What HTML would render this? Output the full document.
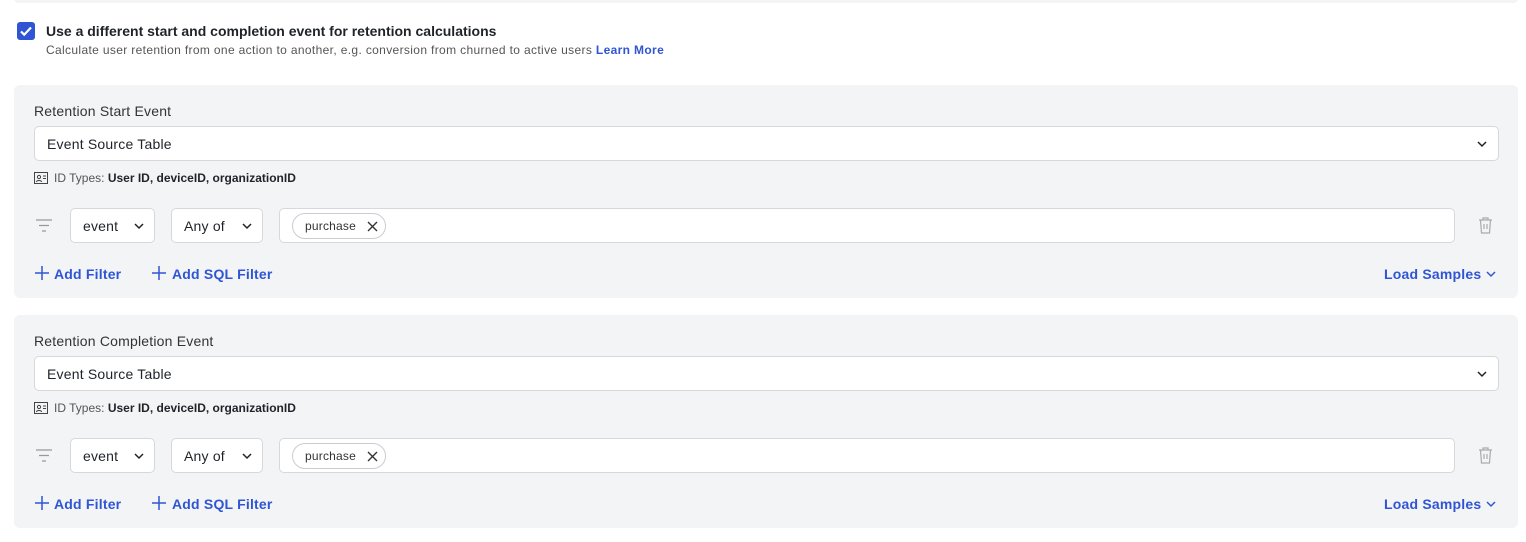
<!DOCTYPE html><html><head><style>
*{box-sizing:border-box;margin:0;padding:0}
body{width:1526px;height:542px;background:#fff;font-family:"Liberation Sans",sans-serif;color:#1f2328;position:relative;overflow:hidden}
.top{position:absolute;left:14px;top:-6px;width:1504px;height:9px;background:#f3f4f6;border-radius:6px}
.cb{position:absolute;left:17px;top:22px;width:18px;height:18px;background:#2f55d4;border-radius:3px}
.t1{position:absolute;left:46px;top:23px;font-size:14px;font-weight:bold;color:#1f2328}
.t2{position:absolute;left:46px;top:43px;font-size:12px;letter-spacing:0.35px;color:#555}
.t2 b{color:#2f55d4}
.panel{position:absolute;left:14px;width:1504px;height:213px;background:#f3f4f6;border-radius:6px}
.lbl{position:absolute;left:20px;top:18px;font-size:14px;color:#333;letter-spacing:0.2px}
.sel{position:absolute;left:20px;top:41px;width:1465px;height:35px;background:#fff;border:1px solid #d6d8dc;border-radius:5px;font-size:14px;padding:9px 12px;letter-spacing:0.2px}
.ids{position:absolute;left:20px;top:86px;font-size:12px;color:#555}
.ids b{color:#1f2328;font-weight:bold}
.box{position:absolute;top:123px;height:35px;background:#fff;border:1px solid #d6d8dc;border-radius:5px;font-size:14px;padding:9px 12px;letter-spacing:0.2px}
.chip{position:absolute;left:12px;top:4px;height:26px;width:94px;border:1px solid #c9ccd1;border-radius:13px;font-size:12px;line-height:24px;padding-left:12px;color:#333}
.link{position:absolute;top:181px;font-size:14px;font-weight:bold;color:#2f55d4;letter-spacing:0.2px}
svg{position:absolute}
</style></head><body>
<div class="top"></div>
<div class="cb"><svg width="18" height="18" viewBox="0 0 18 18"><path d="M4 9.5l3.2 3.2L14 5.5" stroke="#fff" stroke-width="2.2" fill="none"/></svg></div>
<div class="t1">Use a different start and completion event for retention calculations</div>
<div class="t2">Calculate user retention from one action to another, e.g. conversion from churned to active users <b>Learn More</b></div>

<div class="panel" style="top:85px">
<div class="lbl">Retention Start Event</div>
<div class="sel">Event Source Table<svg style="right:10px;top:13px" width="12" height="8"><path d="M2 2l4 4 4-4" stroke="#222" stroke-width="1.5" fill="none"/></svg></div>
<div class="ids"><svg style="left:0;top:1px" width="14" height="12"><rect x=".5" y=".5" width="13" height="11" fill="none" stroke="#444"/><circle cx="5" cy="5" r="1.6" fill="none" stroke="#444"/><path d="M2.5 10c0-2 5-2 5 0M9 4h3M9 6.5h3" stroke="#444" fill="none"/></svg><span style="margin-left:20px">ID Types: <b>User ID, deviceID, organizationID</b></span></div>
<svg style="left:21px;top:134px" width="18" height="14"><path d="M1 1h16M4 6.5h10M7 12h4" stroke="#999" stroke-width="1.3"/></svg>
<div class="box" style="left:56px;width:85px">event<svg style="right:9px;top:13px" width="12" height="8"><path d="M2 2l4 4 4-4" stroke="#222" stroke-width="1.5" fill="none"/></svg></div>
<div class="box" style="left:157px;width:92px">Any of<svg style="right:9px;top:13px" width="12" height="8"><path d="M2 2l4 4 4-4" stroke="#222" stroke-width="1.5" fill="none"/></svg></div>
<div class="box" style="left:265px;width:1176px"><div class="chip">purchase<svg style="left:74px;top:7px" width="11" height="11"><path d="M1 1l9 9M10 1l-9 9" stroke="#333" stroke-width="1.4"/></svg></div></div>
<svg style="left:1464px;top:132px" width="15" height="17"><path d="M1 3h13M5 3V1h5v2M2.5 3l1 13h8l1-13M6 7v5M9 7v5" stroke="#aaa" stroke-width="1.2" fill="none"/></svg>
<svg style="left:21px;top:181px" width="14" height="14"><path d="M7 0v14M0 7h14" stroke="#2f55d4" stroke-width="1.5"/></svg>
<div class="link" style="left:40px">Add Filter</div>
<svg style="left:138px;top:181px" width="14" height="14"><path d="M7 0v14M0 7h14" stroke="#2f55d4" stroke-width="1.5"/></svg>
<div class="link" style="left:158px">Add SQL Filter</div>
<div class="link" style="left:1370px">Load Samples</div>
<svg style="left:1471px;top:185px" width="12" height="8"><path d="M2 2l4 4 4-4" stroke="#2f55d4" stroke-width="1.5" fill="none"/></svg>
</div>

<div class="panel" style="top:315px">
<div class="lbl">Retention Completion Event</div>
<div class="sel">Event Source Table<svg style="right:10px;top:13px" width="12" height="8"><path d="M2 2l4 4 4-4" stroke="#222" stroke-width="1.5" fill="none"/></svg></div>
<div class="ids"><svg style="left:0;top:1px" width="14" height="12"><rect x=".5" y=".5" width="13" height="11" fill="none" stroke="#444"/><circle cx="5" cy="5" r="1.6" fill="none" stroke="#444"/><path d="M2.5 10c0-2 5-2 5 0M9 4h3M9 6.5h3" stroke="#444" fill="none"/></svg><span style="margin-left:20px">ID Types: <b>User ID, deviceID, organizationID</b></span></div>
<svg style="left:21px;top:134px" width="18" height="14"><path d="M1 1h16M4 6.5h10M7 12h4" stroke="#999" stroke-width="1.3"/></svg>
<div class="box" style="left:56px;width:85px">event<svg style="right:9px;top:13px" width="12" height="8"><path d="M2 2l4 4 4-4" stroke="#222" stroke-width="1.5" fill="none"/></svg></div>
<div class="box" style="left:157px;width:92px">Any of<svg style="right:9px;top:13px" width="12" height="8"><path d="M2 2l4 4 4-4" stroke="#222" stroke-width="1.5" fill="none"/></svg></div>
<div class="box" style="left:265px;width:1176px"><div class="chip">purchase<svg style="left:74px;top:7px" width="11" height="11"><path d="M1 1l9 9M10 1l-9 9" stroke="#333" stroke-width="1.4"/></svg></div></div>
<svg style="left:1464px;top:132px" width="15" height="17"><path d="M1 3h13M5 3V1h5v2M2.5 3l1 13h8l1-13M6 7v5M9 7v5" stroke="#aaa" stroke-width="1.2" fill="none"/></svg>
<svg style="left:21px;top:181px" width="14" height="14"><path d="M7 0v14M0 7h14" stroke="#2f55d4" stroke-width="1.5"/></svg>
<div class="link" style="left:40px">Add Filter</div>
<svg style="left:138px;top:181px" width="14" height="14"><path d="M7 0v14M0 7h14" stroke="#2f55d4" stroke-width="1.5"/></svg>
<div class="link" style="left:158px">Add SQL Filter</div>
<div class="link" style="left:1370px">Load Samples</div>
<svg style="left:1471px;top:185px" width="12" height="8"><path d="M2 2l4 4 4-4" stroke="#2f55d4" stroke-width="1.5" fill="none"/></svg>
</div>
</body></html>
